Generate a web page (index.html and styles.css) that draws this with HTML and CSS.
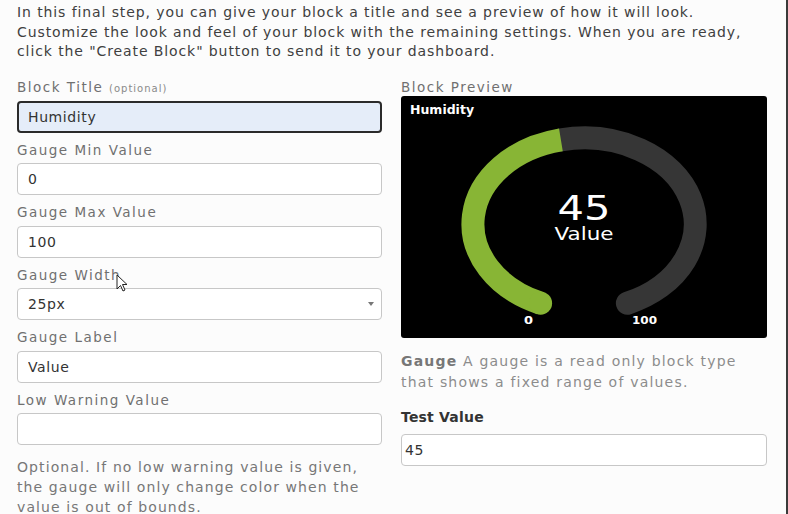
FILE: index.html
```html
<!DOCTYPE html>
<html lang="en">
    <head>
        <meta charset="utf-8">
        <title>Create Block - Settings</title>
        <link rel="stylesheet" href="styles.css">
    </head>
    <body>
<div class="page">
  <p class="intro">In this final step, you can give your block a title and see a preview of how it will look. Customize the look and feel of your block with the remaining settings. When you are ready, click the "Create Block" button to send it to your dashboard.</p>

  <div class="columns">
    <!-- left: block settings -->
    <div class="settings">
      <div class="field">
        <label class="label">Block Title <small>(optional)</small></label>
        <input class="input focused" value="Humidity">
      </div>
      <div class="field">
        <label class="label">Gauge Min Value</label>
        <input class="input" value="0">
      </div>
      <div class="field">
        <label class="label">Gauge Max Value</label>
        <input class="input" value="100">
      </div>
      <div class="field">
        <label class="label has-cursor">Gauge Width
          <svg class="cursor" viewBox="0 0 12 18"><path d="M1 1 L1 15 L4.5 11.5 L7 17 L9 16 L6.5 10.5 L11 10.5 Z" fill="#fff" stroke="#222" stroke-width="1" stroke-linejoin="round"/></svg>
        </label>
        <div class="input select">25px<span class="arrow"></span></div>
      </div>
      <div class="field">
        <label class="label">Gauge Label</label>
        <input class="input" value="Value">
      </div>
      <div class="field">
        <label class="label">Low Warning Value</label>
        <input class="input" value="">
      </div>
      <p class="help">Optional. If no low warning value is given, the gauge will only change color when the value is out of bounds.</p>
    </div>

    <!-- right: live preview -->
    <div class="preview">
      <div class="label preview-label">Block Preview</div>
      <div class="card">
        <div class="card-title">Humidity</div>
        <svg class="gauge" viewBox="0 22 366 220">
          <path d="M159.9 43.9 A111 86 0 0 1 226.4 207.2" fill="none" stroke="#363636" stroke-width="23" stroke-linecap="round"/>
          <path d="M139.6 207.2 A111 86 0 0 1 159.9 43.9" fill="none" stroke="#88b535" stroke-width="23"/>
          <circle cx="139.6" cy="207.2" r="11.5" fill="#88b535"/>
          <text x="183" y="124" text-anchor="middle" font-size="33" fill="#fff" textLength="53" lengthAdjust="spacingAndGlyphs">45</text>
          <text x="183" y="144" text-anchor="middle" font-size="18" fill="#fff" textLength="59" lengthAdjust="spacingAndGlyphs">Value</text>
          <text x="127.5" y="228" text-anchor="middle" font-size="11" font-weight="bold" fill="#fff" textLength="9" lengthAdjust="spacingAndGlyphs">0</text>
          <text x="243.5" y="228" text-anchor="middle" font-size="11" font-weight="bold" fill="#fff" textLength="25" lengthAdjust="spacingAndGlyphs">100</text>
        </svg>
      </div>
      <p class="desc"><b>Gauge</b> A gauge is a read only block type that shows a fixed range of values.</p>
      <label class="test-label">Test Value</label>
      <input class="input test" value="45">
    </div>
  </div>
</div>
    </body>
</html>
```

FILE: styles.css
```css
html, body { margin: 0; }
body {
    background: #fcfcfc;
    font-family: "DejaVu Sans", sans-serif;
    color: #404040;
}
.page {
    width: 769px;
    min-height: 514px;
    padding-left: 17px;
    border-right: 2px solid #3a3a3a;
}
.intro {
    margin: 0;
    padding-top: 3px;
    width: 750px;
    font-size: 14px;
    line-height: 19.5px;
    letter-spacing: 0.9px;
}
.columns {
    display: grid;
    grid-template-columns: 365px 366px;
    column-gap: 19px;
    margin-top: 16.5px;
}

/* form fields */
.field { margin-bottom: 8px; }
.label {
    display: block;
    font-size: 13.5px;
    line-height: 18px;
    letter-spacing: 1.5px;
    color: #707070;
    margin-bottom: 4.5px;
}
.label small {
    font-size: 10px;
    line-height: 0;
    letter-spacing: 1px;
    color: #8a8a8a;
}
.preview-label { margin-bottom: 0; }
.has-cursor { position: relative; }
.cursor {
    position: absolute;
    left: 99px; top: 8px;
    width: 12px; height: 18px;
}
.input {
    display: block;
    box-sizing: border-box;
    width: 100%;
    height: 32px;
    margin: 0;
    padding: 0 10px;
    border: 1px solid #c7c7c7;
    border-radius: 4px;
    background: #fff;
    font-family: inherit;
    font-size: 14px;
    letter-spacing: 0.6px;
    color: #333;
    outline: none;
}
.input.focused {
    border: 2px solid #2b2b2b;
    background: #e5edf9;
    padding: 0 9px;
}
.select {
    display: flex;
    align-items: center;
    justify-content: space-between;
    padding-right: 7px;
}
.arrow {
    border-left: 3.5px solid transparent;
    border-right: 3.5px solid transparent;
    border-top: 4px solid #777;
}
.help {
    margin: 12px 0 0;
    font-size: 14px;
    line-height: 20px;
    letter-spacing: 1.1px;
    color: #777;
}

/* preview */
.card {
    height: 242px;
    background: #000;
    border-radius: 3px;
}
.card-title {
    padding: 6px 9px 0;
    font-size: 12.5px;
    line-height: 16px;
    font-weight: bold;
    color: #fff;
}
.gauge {
    display: block;
    width: 366px;
    height: 220px;
}
.desc {
    margin: 12.5px 0 0;
    font-size: 14px;
    line-height: 21px;
    letter-spacing: 1.2px;
    color: #8c8c8c;
}
.desc b { color: #777; }
.test-label {
    display: block;
    margin: 15.5px 0 8px;
    font-size: 14px;
    line-height: 18px;
    font-weight: bold;
    letter-spacing: 0.2px;
    color: #333;
}
.input.test { padding-left: 3px; }
```
